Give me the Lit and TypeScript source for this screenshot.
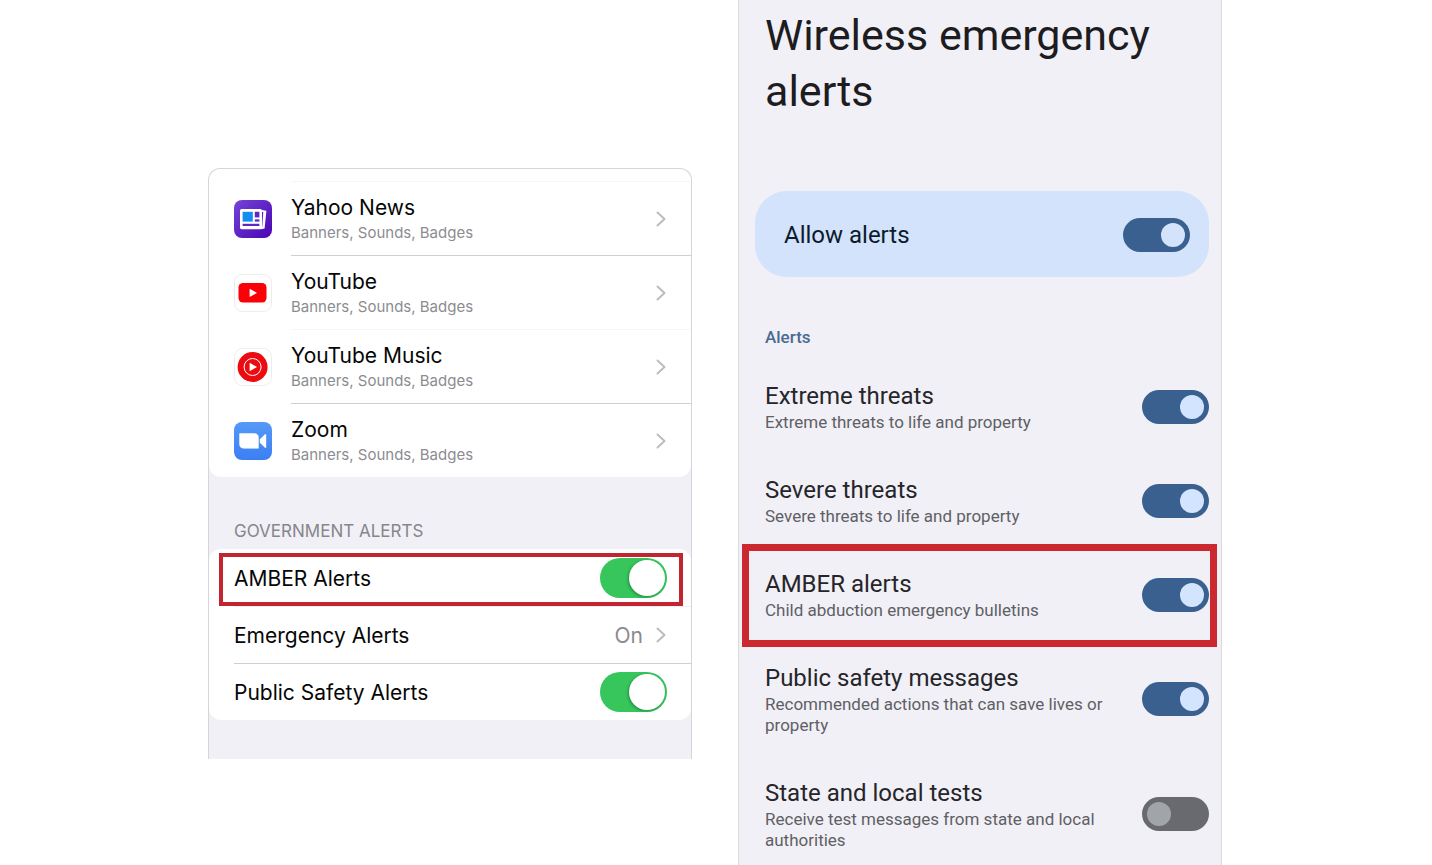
import { LitElement, html, css, svg, nothing } from "lit";
import { customElement, property } from "lit/decorators.js";
import { classMap } from "lit/directives/class-map.js";

const chevron = html`<svg class="chevron" viewBox="0 0 12 18" aria-hidden="true">
  <path d="M2.5 2.5 L9.5 9 L2.5 15.5" fill="none" stroke="#bdbdc0" stroke-width="2" stroke-linecap="round" stroke-linejoin="round" />
</svg>`;

const icons = {
  news: svg`
    <defs>
      <linearGradient id="violet" x1="0" y1="0" x2="1" y2="1">
        <stop offset="0" stop-color="#7345d6" />
        <stop offset="1" stop-color="#4c04b4" />
      </linearGradient>
    </defs>
    <rect width="38" height="38" rx="8" fill="url(#violet)" />
    <path d="M28 10 L32.4 10.8 L30.6 28.4 L27 29.2 Z" fill="#fff" />
    <path d="M28.6 12 L27.6 26.6" stroke="#5a1cbc" stroke-width="1.3" />
    <rect x="6" y="9" width="22" height="20.2" rx="1.6" fill="#fff" />
    <rect x="8.6" y="11.8" width="10.2" height="9.8" fill="#128df2" />
    <rect x="20.8" y="11.8" width="4.6" height="5.6" fill="#5f26c4" />
    <rect x="20.8" y="19.4" width="4.6" height="2.2" fill="#5f26c4" />
    <rect x="8.6" y="23.8" width="16.8" height="2.2" fill="#5f26c4" />`,
  youtube: svg`
    <rect x=".5" y=".5" width="37" height="37" rx="8" fill="#fff" stroke="#ededed" />
    <rect x="4.5" y="9" width="28" height="19.6" rx="4.5" fill="#fb0007" />
    <path d="M15.6 14.8 L23 18.9 L15.6 23 Z" fill="#fff" />`,
  music: svg`
    <rect x=".5" y=".5" width="37" height="37" rx="8" fill="#fff" stroke="#ededed" />
    <circle cx="18.6" cy="19" r="15" fill="#ea0c10" />
    <circle cx="18.6" cy="19" r="8.5" fill="none" stroke="#fff" stroke-width="1" />
    <path d="M15.6 14.7 L23 19 L15.6 23.3 Z" fill="#fff" />`,
  zoom: svg`
    <defs>
      <linearGradient id="azure" x1="0" y1="0" x2="0" y2="1">
        <stop offset="0" stop-color="#5599f8" />
        <stop offset="1" stop-color="#3b7ff3" />
      </linearGradient>
    </defs>
    <rect width="38" height="38" rx="8" fill="url(#azure)" />
    <path d="M5.6 11.6 H20 Q24.4 11.6 24.4 15.8 V26.2 H10 Q5.6 26.2 5.6 22 Z" fill="#fff" stroke="#fff" stroke-width=".6" stroke-linejoin="round" />
    <path d="M25.8 17.2 L30.8 12.4 Q32.2 11.4 32.2 13 V25 Q32.2 26.4 30.8 25.6 L25.8 20.8 Z" fill="#fff" />`,
};

type IconName = keyof typeof icons;

const apps: { name: string; icon: IconName; faint: boolean }[] = [
  { name: "Yahoo News", icon: "news", faint: true },
  { name: "YouTube", icon: "youtube", faint: false },
  { name: "YouTube Music", icon: "music", faint: true },
  { name: "Zoom", icon: "zoom", faint: false },
];

const alerts = [
  { title: "Extreme threats", detail: "Extreme threats to life and property", on: true },
  { title: "Severe threats", detail: "Severe threats to life and property", on: true },
  { title: "AMBER alerts", detail: "Child abduction emergency bulletins", on: true, marked: true },
  { title: "Public safety messages", detail: "Recommended actions that can save lives or property", on: true },
  { title: "State and local tests", detail: "Receive test messages from state and local authorities", on: false },
];

@customElement("toggle-row")
class ToggleRow extends LitElement {
  @property() heading = "";
  @property() detail = "";
  @property({ type: Boolean }) on = false;
  @property({ type: Boolean }) marked = false;

  static styles = css`
    :host {
      display: block;
    }
    .row {
      display: flex;
      align-items: center;
      gap: 32px;
      padding: 20px 12px 21px 26px;
      position: relative;
    }
    :host(:last-of-type) .row {
      padding-bottom: 12px;
    }
    .text {
      flex: 1;
      min-width: 0;
    }
    .heading,
    .detail {
      display: block;
    }
    .heading {
      font-size: 24px;
      line-height: 32px;
      color: #25252a;
    }
    .detail {
      font-size: 17px;
      line-height: 21px;
      color: #5f5f65;
    }
    .switch {
      appearance: none;
      box-sizing: border-box;
      flex: none;
      display: flex;
      align-items: center;
      width: 67px;
      height: 34px;
      margin: 0;
      padding: 0 5px;
      border-radius: 17px;
      background: #686a70;
    }
    .switch::before {
      content: "";
      width: 24px;
      height: 24px;
      border-radius: 50%;
      background: #a2a5a8;
    }
    .switch:checked {
      justify-content: flex-end;
      background: #39608f;
    }
    .switch:checked::before {
      background: #d3e4ff;
    }
    .mark {
      position: absolute;
      inset: -4px 4px -5px 3px;
      border: 7px solid #cc2830;
      pointer-events: none;
    }
  `;

  render() {
    return html`<label class="row">
      <span class="text">
        <span class="heading">${this.heading}</span>
        <span class="detail">${this.detail}</span>
      </span>
      <input class="switch" type="checkbox" role="switch" .checked=${this.on} />
      ${this.marked ? html`<span class="mark"></span>` : nothing}
    </label>`;
  }
}

@customElement("android-panel")
class AndroidPanel extends LitElement {
  static styles = css`
    :host {
      display: block;
      box-sizing: border-box;
      min-height: 100vh;
      border: solid #dadadd;
      border-width: 0 1px;
      background: #f1f0f6;
      font-family: Roboto, sans-serif;
    }
    .title {
      margin: 0;
      padding: 7px 26px 0;
      font-size: 43px;
      line-height: 56px;
      font-weight: 400;
      color: #1d1c21;
    }
    .allow {
      display: flex;
      align-items: center;
      justify-content: space-between;
      box-sizing: border-box;
      min-height: 86px;
      margin: 72px 12px 0 16px;
      padding: 2px 19px 0 29px;
      border-radius: 32px;
      background: #d3e3fc;
      font-size: 24px;
      line-height: 32px;
      color: #0d1b2c;
    }
    .switch {
      appearance: none;
      box-sizing: border-box;
      display: flex;
      align-items: center;
      width: 67px;
      height: 34px;
      margin: 0;
      padding: 0 5px;
      border-radius: 17px;
      background: #686a70;
    }
    .switch::before {
      content: "";
      width: 24px;
      height: 24px;
      border-radius: 50%;
      background: #d3e3fc;
    }
    .switch:checked {
      justify-content: flex-end;
      background: #39608f;
    }
    .group {
      margin: 50px 26px 13px;
      font-size: 17px;
      line-height: 20px;
      font-weight: 500;
      color: #4a6a92;
    }
  `;

  render() {
    return html`
      <h1 class="title">Wireless emergency alerts</h1>
      <label class="allow">
        <span>Allow alerts</span>
        <input class="switch" type="checkbox" role="switch" checked />
      </label>
      <h2 class="group">Alerts</h2>
      ${alerts.map(
        (a) => html`<toggle-row .heading=${a.title} .detail=${a.detail} .on=${a.on} .marked=${!!a.marked}></toggle-row>`
      )}
    `;
  }
}

@customElement("ios-panel")
class IosPanel extends LitElement {
  static styles = css`
    :host {
      display: block;
      box-sizing: border-box;
      padding-bottom: 39px;
      border: 1px solid #d6d6da;
      border-bottom: 0;
      border-radius: 12px 12px 0 0;
      background: #f1f0f6;
      font-family: Inter, sans-serif;
      color: #060606;
    }
    .apps {
      padding-top: 12px;
      border-radius: 12px;
      background: #fff;
    }
    .app {
      display: flex;
      align-items: center;
      gap: 19px;
      padding-left: 25px;
      color: inherit;
      text-decoration: none;
    }
    .icon {
      flex: none;
      width: 38px;
      height: 38px;
      margin-top: 2px;
    }
    .body {
      flex: 1;
      display: flex;
      align-items: center;
      justify-content: space-between;
      box-sizing: border-box;
      height: 74px;
      padding-right: 24px;
      border-top: 1px solid #cfcfd2;
    }
    .faint {
      border-top-color: #f7f7f8;
    }
    .name,
    .note {
      display: block;
    }
    .name {
      font-size: 21px;
      line-height: 28px;
    }
    .note {
      font-size: 15px;
      line-height: 22px;
      color: #8c8c90;
    }
    .chevron {
      flex: none;
      width: 12px;
      height: 18px;
    }
    .group {
      margin: 42px 25px 6px;
      font-size: 17px;
      line-height: 24px;
      font-weight: 400;
      color: #86868b;
    }
    .settings {
      border-radius: 12px;
      background: #fff;
    }
    .setting {
      display: block;
      position: relative;
      padding-left: 25px;
      font-size: 21px;
      color: inherit;
      text-decoration: none;
    }
    .line {
      display: flex;
      align-items: center;
      justify-content: space-between;
      box-sizing: border-box;
      height: 57px;
      padding-right: 24px;
      border-top: 1px solid #cfcfd2;
    }
    .line.soft {
      border-top-color: #f0f0f2;
    }
    .line.first {
      border-top-color: transparent;
    }
    .value {
      display: flex;
      align-items: center;
      gap: 12px;
      color: #8a8a8e;
    }
    .switch {
      appearance: none;
      box-sizing: border-box;
      display: flex;
      align-items: center;
      width: 67px;
      height: 40px;
      margin: 0;
      padding: 0 2px;
      border-radius: 20px;
      background: #e3e3e6;
    }
    .switch::before {
      content: "";
      width: 36px;
      height: 36px;
      border-radius: 50%;
      background: #fff;
      box-shadow: -1px 1px 3px rgba(0, 0, 0, 0.3);
    }
    .switch:checked {
      justify-content: flex-end;
      background: #36c65b;
    }
    .mark {
      position: absolute;
      inset: 4px 8px 0 10px;
      border: 4px solid #c32530;
      pointer-events: none;
    }
  `;

  render() {
    return html`
      <nav class="apps">
        ${apps.map(
          (a) => html`<a class="app" href="#">
            <svg class="icon" viewBox="0 0 38 38" aria-hidden="true">${icons[a.icon]}</svg>
            <span class=${classMap({ body: true, faint: a.faint })}>
              <span>
                <span class="name">${a.name}</span>
                <span class="note">Banners, Sounds, Badges</span>
              </span>
              ${chevron}
            </span>
          </a>`
        )}
      </nav>
      <h2 class="group">GOVERNMENT ALERTS</h2>
      <div class="settings">
        <label class="setting">
          <span class="line first">
            <span>AMBER Alerts</span>
            <input class="switch" type="checkbox" role="switch" checked />
          </span>
          <span class="mark"></span>
        </label>
        <a class="setting" href="#">
          <span class="line soft">
            <span>Emergency Alerts</span>
            <span class="value">On ${chevron}</span>
          </span>
        </a>
        <label class="setting">
          <span class="line">
            <span>Public Safety Alerts</span>
            <input class="switch" type="checkbox" role="switch" checked />
          </span>
        </label>
      </div>
    `;
  }
}

@customElement("app-root")
class AppRoot extends LitElement {
  static styles = css`
    :host {
      display: block;
      min-height: 100vh;
      background: #fff;
    }
    .panels {
      display: grid;
      grid-template-columns: repeat(2, minmax(0, 484px));
      align-items: start;
      gap: 46px;
      max-width: 1016px;
      margin: 0 auto;
    }
    .ios {
      margin-top: 168px;
    }
  `;

  render() {
    return html`<main class="panels">
      <ios-panel class="ios"></ios-panel>
      <android-panel></android-panel>
    </main>`;
  }
}
